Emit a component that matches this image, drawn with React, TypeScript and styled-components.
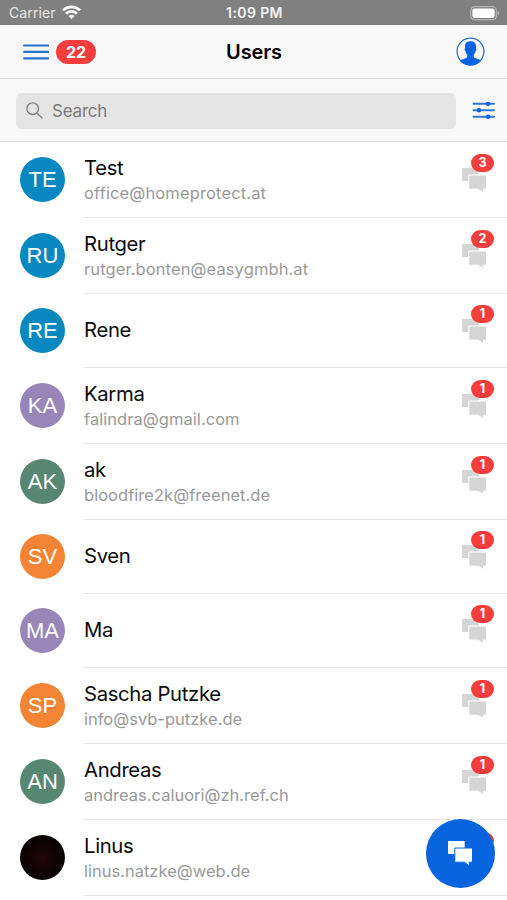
import React from 'react';
import styled, { createGlobalStyle } from 'styled-components';

const GlobalStyle = createGlobalStyle`
  * { box-sizing: border-box; }
  body { margin: 0; background: #fff; }
`;

const Screen = styled.div`
  position: relative;
  width: 507px;
  height: 900px;
  overflow: hidden;
  background: #fff;
  font-family: Inter, 'Liberation Sans', sans-serif;
  color: #0a0a0a;
`;

const StatusBar = styled.header`
  display: grid;
  grid-template-columns: 1fr auto 1fr;
  align-items: center;
  height: 25px;
  padding: 1px 7px 0 9px;
  background: #808080;
  color: #f4f4f4;
  font-size: 14px;
`;

const Carrier = styled.div`
  display: flex;
  align-items: center;
  gap: 6px;
  height: 24px;
  padding-bottom: 1px;
  color: #e6e6e6;
  letter-spacing: 0.1px;
`;

const Clock = styled.div`
  height: 18px;
  font-weight: 600;
  font-size: 14px;
  line-height: 17px;
  letter-spacing: 0.4px;
`;

const StatusRight = styled.div`
  display: flex;
  justify-content: flex-end;
`;

const NavBar = styled.nav`
  display: grid;
  grid-template-columns: 1fr auto 1fr;
  align-items: center;
  height: 54px;
  padding: 0 22px 0 23px;
  background: #f8f8f8;
  border-bottom: 1px solid #dcdcdc;
`;

const MenuGroup = styled.div`
  display: flex;
  align-items: center;
  gap: 7px;
`;

const MenuBadge = styled.span`
  width: 40px;
  height: 24px;
  border-radius: 12px;
  background: #f53d3d;
  color: #fff;
  font-size: 16px;
  line-height: 24px;
  font-weight: 700;
  text-align: center;
`;

const Title = styled.h1`
  margin: 0;
  font-size: 20px;
  font-weight: 600;
  letter-spacing: -0.1px;
  color: #000;
`;

const NavRight = styled.div`
  display: flex;
  justify-content: flex-end;
`;

const SearchBar = styled.div`
  display: flex;
  align-items: center;
  gap: 16px;
  height: 63px;
  padding: 1px 11px 0 16px;
  background: #f8f8f8;
  border-bottom: 1px solid #dcdcdc;
`;

const SearchField = styled.div`
  display: flex;
  align-items: center;
  gap: 9px;
  width: 440px;
  height: 36px;
  padding-left: 10px;
  border-radius: 6px;
  background: #e4e4e4;
  color: #7b7b7b;
  font-size: 17px;
  letter-spacing: -0.2px;
`;

const List = styled.ul`
  margin: 0;
  padding: 0;
  list-style: none;
`;

const Row = styled.li<{ $short: boolean }>`
  display: flex;
  align-items: center;
  height: ${(p) => (p.$short ? 74 : 76)}px;
  padding-left: 20px;
`;

const Avatar = styled.div<{ $color: string }>`
  flex: none;
  width: 45px;
  height: 45px;
  margin-bottom: 1px;
  border-radius: 50%;
  background: ${(p) => p.$color};
  color: #fff;
  font: 22px/46px 'Liberation Sans', Arial, sans-serif;
  text-align: center;
`;

const RowBody = styled.div`
  display: flex;
  flex: 1;
  align-items: center;
  justify-content: space-between;
  height: 100%;
  margin-left: 19px;
  padding-right: 13px;
  border-bottom: 1px solid #e6e6e6;
`;

const RowText = styled.div<{ $single: boolean }>`
  padding: ${(p) => (p.$single ? '0 0 2px' : '2px 0 0')};
`;

const Name = styled.div`
  font-size: 20.3px;
  line-height: 25px;
  letter-spacing: -0.33px;
`;

const Email = styled.div<{ $spacing?: number }>`
  margin-top: 1px;
  font-size: 16.5px;
  line-height: 25px;
  letter-spacing: ${(p) => p.$spacing ?? 0}px;
  color: #999;
`;

const ChatStatus = styled.div`
  position: relative;
  width: 33px;
  height: 50px;
  padding-top: 12px;
`;

const CountBadge = styled.span`
  position: absolute;
  top: -1px;
  right: 0;
  width: 23px;
  height: 18px;
  border-radius: 9px;
  background: #f53d3d;
  color: #fff;
  font-size: 12.5px;
  line-height: 18px;
  font-weight: 700;
  text-align: center;
`;

const ChatButton = styled.button`
  position: absolute;
  left: 426px;
  top: 819px;
  display: flex;
  align-items: center;
  justify-content: center;
  width: 69px;
  height: 69px;
  padding: 0 1px 1px 0;
  border: 0;
  border-radius: 50%;
  background: #0664df;
`;

const WifiIcon = () => (
  <svg width="19" height="15" viewBox="0 0 19 15" fill="none" stroke="#fff" strokeWidth="2.6">
    <path d="M1 5.3C5.7.7 13.3.7 18 5.3M4 8.6c3-3 8-3 11 0" />
    <path d="M6.5 11c1.7-1.7 4.3-1.7 6 0l-3 3z" fill="#fff" stroke="none" />
  </svg>
);

const BatteryIcon = () => (
  <svg width="30" height="15" viewBox="0 0 30 15">
    <rect x=".7" y=".7" width="25.6" height="13" rx="3.8" fill="none" stroke="#b5b5b5" strokeWidth="1.2" />
    <rect x="2.4" y="2.4" width="22.2" height="9.6" rx="2.2" fill="#fff" />
    <path d="M27.6 4.8c2.2.8 2.2 4 0 4.8z" fill="#b5b5b5" />
  </svg>
);

const MenuIcon = () => (
  <svg width="26" height="16" viewBox="0 0 26 16" stroke="#2a71cf" strokeWidth="2.2" strokeLinecap="round">
    <path d="M1.2 1.5h23.800M1.2 7.900h23.800M1.2 14.300h23.800" />
  </svg>
);

const ProfileIcon = () => (
  <svg width="29" height="29" viewBox="0 0 29 29">
    <circle cx="14.5" cy="14.5" r="13.4" fill="#f8f8f8" stroke="#246fd4" strokeWidth="1.2" />
    <path
      d="M14.5 4.200c-3.800 0-5.600 1.800-5.500 4.800v2.200c-.7.400-.4 2.300.5 2.700.3 1.700.9 2.900 1.700 3.700v2.400c-.5 1.500-5 2-7.600 3.500a14 14 0 0 0 21.800 0c-2.600-1.500-7.100-2-7.600-3.500v-2.400c.8-.8 1.400-2 1.700-3.700.9-.4 1.200-2.300.5-2.700V9c.1-3-1.700-4.800-5.500-4.800z"
      fill="#0664df"
    />
  </svg>
);

const SearchIcon = () => (
  <svg width="17" height="17" viewBox="0 0 17 17" fill="none" stroke="#808080" strokeWidth="1.4">
    <circle cx="6.7" cy="6.7" r="5.8" />
    <path d="M10.9 10.9l5.400 5.300" />
  </svg>
);

const FilterIcon = () => (
  <svg width="23" height="18" viewBox="0 0.8 23 18" stroke="#2b75d6" strokeWidth="1.9" strokeLinecap="round">
    <path d="M1.5 2.6h20.500M1.5 9.100h20.500M1.5 15.600h20.500" />
    <g fill="#0664df" stroke="none">
      <circle cx="16" cy="2.6" r="2.2" />
      <circle cx="7" cy="9.1" r="2.2" />
      <circle cx="16" cy="15.6" r="2.2" />
    </g>
  </svg>
);

const ChatIcon = ({ color, gap }: { color: string; gap: string }) => (
  <svg width="26" height="26" viewBox="0 0 26 26" display="block">
    <path d="M1 1h16.700v13H1z" fill={color} />
    <path
      d="M7.800 8h17.700v14.200h-3.200v3.600L17.400 22.200H7.800z"
      fill={color}
      stroke={gap}
      strokeWidth="1"
      strokeLinejoin="round"
    />
  </svg>
);

interface User {
  name: string;
  initials: string;
  color: string;
  count: number;
  email?: string;
  spacing?: number;
}

const BLUE = '#0788c1';
const PURPLE = '#9886b8';
const GREEN = '#578772';
const ORANGE = '#f38433';

const users: User[] = [
  { name: 'Test', initials: 'TE', color: BLUE, count: 3, email: 'office@homeprotect.at', spacing: 0.14 },
  { name: 'Rutger', initials: 'RU', color: BLUE, count: 2, email: 'rutger.bonten@easygmbh.at', spacing: 0.1 },
  { name: 'Rene', initials: 'RE', color: BLUE, count: 1 },
  { name: 'Karma', initials: 'KA', color: PURPLE, count: 1, email: 'falindra@gmail.com', spacing: 0.05 },
  { name: 'ak', initials: 'AK', color: GREEN, count: 1, email: 'bloodfire2k@freenet.de', spacing: 0.04 },
  { name: 'Sven', initials: 'SV', color: ORANGE, count: 1 },
  { name: 'Ma', initials: 'MA', color: PURPLE, count: 1 },
  { name: 'Sascha Putzke', initials: 'SP', color: ORANGE, count: 1, email: 'info@svb-putzke.de' },
  { name: 'Andreas', initials: 'AN', color: GREEN, count: 1, email: 'andreas.caluori@zh.ref.ch' },
  {
    name: 'Linus',
    initials: '',
    color: 'radial-gradient(circle, #210508 0%, #0d0203 55%, #020101 100%)',
    count: 1,
    email: 'linus.natzke@web.de',
  },
];

const UserRow = ({ user }: { user: User }) => (
  <Row $short={!user.email}>
    <Avatar $color={user.color}>{user.initials}</Avatar>
    <RowBody>
      <RowText $single={!user.email}>
        <Name>{user.name}</Name>
        {user.email && <Email $spacing={user.spacing}>{user.email}</Email>}
      </RowText>
      <ChatStatus>
        <ChatIcon color="#d5d5d5" gap="#fff" />
        <CountBadge>{user.count}</CountBadge>
      </ChatStatus>
    </RowBody>
  </Row>
);

export default function App() {
  return (
    <>
      <GlobalStyle />
      <Screen>
        <StatusBar>
          <Carrier>
            Carrier
            <WifiIcon />
          </Carrier>
          <Clock>1:09 PM</Clock>
          <StatusRight>
            <BatteryIcon />
          </StatusRight>
        </StatusBar>
        <NavBar>
          <MenuGroup>
            <MenuIcon />
            <MenuBadge>22</MenuBadge>
          </MenuGroup>
          <Title>Users</Title>
          <NavRight>
            <ProfileIcon />
          </NavRight>
        </NavBar>
        <SearchBar>
          <SearchField>
            <SearchIcon />
            Search
          </SearchField>
          <FilterIcon />
        </SearchBar>
        <List>
          {users.map((user) => (
            <UserRow key={user.name} user={user} />
          ))}
        </List>
        <ChatButton aria-label="New chat">
          <ChatIcon color="#fff" gap="#0664df" />
        </ChatButton>
      </Screen>
    </>
  );
}
